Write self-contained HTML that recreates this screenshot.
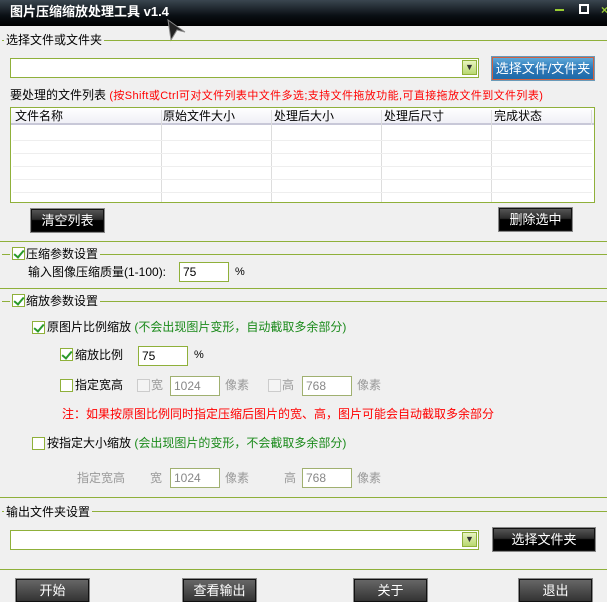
<!DOCTYPE html>
<html><head><meta charset="utf-8"><style>
*{margin:0;padding:0;box-sizing:border-box}
body{width:607px;height:588px;overflow:hidden;background:#f0f0f0;position:relative;font-family:"Liberation Sans","Noto Sans CJK SC","WenQuanYi Zen Hei",sans-serif;font-size:12px;color:#000}
.a{position:absolute;white-space:nowrap;line-height:14px}
.hl{position:absolute;left:0;width:607px;height:1px;background:#8fb03a}
.lab{position:absolute;background:#f0f0f0;padding:0 2px;line-height:14px}
.inp{position:absolute;background:#fff;border:1px solid #8fb03a;height:20px;line-height:18px;padding-left:3px;font-size:12px}
.dis{color:#888;border-color:#a0b070}
.cb{position:absolute;width:13px;height:13px;border:1px solid #8fb03a;background:#fff}
.cb.on::after{content:"";position:absolute;left:3px;top:0px;width:4px;height:8px;border:solid #2a9a2a;border-width:0 2px 2px 0;transform:rotate(40deg)}
.cb.g{border-color:#ccc;background:#f4f4f4}
.btn{position:absolute;background:linear-gradient(#555 0,#2a2a2a 45%,#000 50%,#000 100%);border:1px solid #111;outline:1px solid #888;color:#fff;text-align:center;font-size:13px;line-height:22px}
.dd{position:absolute;width:15px;height:15px;border:1px solid #8fb03a;background:linear-gradient(#e8f4c0,#b8d870);font-size:9px;line-height:13px;text-align:center;color:#333}
.grn{color:#1a8a1a}.red{color:#f00}.gry{color:#999}
</style></head><body>
<div style="position:absolute;left:0;top:0;width:607px;height:26px;background:linear-gradient(#3a4650,#0a0f14 60%,#000)"></div>
<div class="a" style="left:10px;top:5px;color:#fff;font-size:13px;font-weight:bold">图片压缩缩放处理工具 v1.4</div>
<div style="position:absolute;left:555px;top:9px;width:9px;height:2px;background:#9c3"></div>
<div style="position:absolute;left:579px;top:4px;width:10px;height:10px;border:2px solid #fff"></div>
<div class="a" style="left:601px;top:3px;color:#9c3;font-weight:bold">×</div>
<svg style="position:absolute;left:165px;top:18px" width="22" height="24"><path d="M3 2 L20 14 L12 12 L6 22 Z" fill="#222" stroke="#888"/></svg>

<div class="hl" style="top:40px;left:2px"></div>
<div class="lab" style="left:4px;top:33px">选择文件或文件夹</div>
<div class="inp" style="left:10px;top:58px;width:469px"></div>
<div class="dd" style="left:462px;top:60px">▼</div>
<div class="btn" style="left:492px;top:57px;width:102px;height:23px;background:linear-gradient(#5ea8d8,#2c78b8 50%,#1f6aa8);border:1px solid #d06040;outline:1px solid #6a9ab8">选择文件/文件夹</div>
<div class="a" style="left:10px;top:88px">要处理的文件列表 <span class="red" style="font-size:11px;letter-spacing:0.4px">(按Shift或Ctrl可对文件列表中文件多选;支持文件拖放功能,可直接拖放文件到文件列表)</span></div>
<div style="position:absolute;left:10px;top:107px;width:585px;height:96px;border:1px solid #8fb03a;background:#fff">
<div style="position:absolute;left:0;top:0;width:583px;height:17px;background:linear-gradient(#fff,#f0f0f6);border-bottom:2px solid #c8c8d8"></div>
<div class="a" style="left:4px;top:1px">文件名称</div><div class="a" style="left:152px;top:1px">原始文件大小</div><div class="a" style="left:263px;top:1px">处理后大小</div><div class="a" style="left:373px;top:1px">处理后尺寸</div><div class="a" style="left:483px;top:1px">完成状态</div>
<div style="position:absolute;left:150px;top:2px;width:1px;height:92px;background:#ddd"></div>
<div style="position:absolute;left:260px;top:2px;width:1px;height:92px;background:#ddd"></div>
<div style="position:absolute;left:370px;top:2px;width:1px;height:92px;background:#ddd"></div>
<div style="position:absolute;left:480px;top:2px;width:1px;height:92px;background:#ddd"></div>
<div style="position:absolute;left:580px;top:2px;width:1px;height:15px;background:#ddd"></div>
<div style="position:absolute;left:2px;top:32px;width:579px;height:1px;background:#eee"></div>
<div style="position:absolute;left:2px;top:45px;width:579px;height:1px;background:#eee"></div>
<div style="position:absolute;left:2px;top:58px;width:579px;height:1px;background:#eee"></div>
<div style="position:absolute;left:2px;top:71px;width:579px;height:1px;background:#eee"></div>
<div style="position:absolute;left:2px;top:84px;width:579px;height:1px;background:#eee"></div>
</div>
<div class="btn" style="left:31px;top:209px;width:73px;height:23px">清空列表</div>
<div class="btn" style="left:499px;top:208px;width:73px;height:23px">删除选中</div>

<div class="hl" style="top:241px"></div>
<div class="hl" style="top:254px;left:2px"></div>
<div class="lab" style="left:10px;top:247px;padding-left:16px">压缩参数设置</div>
<div class="cb on" style="left:12px;top:247px"></div>
<div class="a" style="left:28px;top:265px">输入图像压缩质量(1-100):</div>
<div class="inp" style="left:179px;top:262px;width:50px">75</div>
<div class="a" style="left:235px;top:265px;font-size:11px">%</div>

<div class="hl" style="top:288px"></div>
<div class="hl" style="top:301px;left:2px"></div>
<div class="lab" style="left:10px;top:294px;padding-left:16px">缩放参数设置</div>
<div class="cb on" style="left:12px;top:294px"></div>

<div class="cb on" style="left:32px;top:321px"></div>
<div class="a" style="left:47px;top:320px">原图片比例缩放 <span class="grn">(不会出现图片变形，自动截取多余部分)</span></div>
<div class="cb on" style="left:60px;top:348px"></div>
<div class="a" style="left:75px;top:348px">缩放比例</div>
<div class="inp" style="left:138px;top:346px;width:50px">75</div>
<div class="a" style="left:194px;top:348px;font-size:11px">%</div>
<div class="cb" style="left:60px;top:379px"></div>
<div class="a" style="left:75px;top:378px">指定宽高</div>
<div class="cb g" style="left:137px;top:379px"></div>
<div class="a gry" style="left:151px;top:378px">宽</div>
<div class="inp dis" style="left:170px;top:376px;width:50px">1024</div>
<div class="a gry" style="left:225px;top:378px">像素</div>
<div class="cb g" style="left:268px;top:379px"></div>
<div class="a gry" style="left:282px;top:378px">高</div>
<div class="inp dis" style="left:302px;top:376px;width:50px">768</div>
<div class="a gry" style="left:357px;top:378px">像素</div>
<div class="a red" style="left:62px;top:407px">注：如果按原图比例同时指定压缩后图片的宽、高，图片可能会自动截取多余部分</div>
<div class="cb" style="left:32px;top:437px"></div>
<div class="a" style="left:47px;top:436px">按指定大小缩放 <span class="grn">(会出现图片的变形，不会截取多余部分)</span></div>
<div class="a gry" style="left:77px;top:471px">指定宽高</div>
<div class="a gry" style="left:150px;top:471px">宽</div>
<div class="inp dis" style="left:170px;top:468px;width:50px">1024</div>
<div class="a gry" style="left:225px;top:471px">像素</div>
<div class="a gry" style="left:284px;top:471px">高</div>
<div class="inp dis" style="left:302px;top:468px;width:50px">768</div>
<div class="a gry" style="left:357px;top:471px">像素</div>

<div class="hl" style="top:497px"></div>
<div class="hl" style="top:511px;left:2px"></div>
<div class="lab" style="left:4px;top:505px">输出文件夹设置</div>
<div class="inp" style="left:10px;top:530px;width:469px"></div>
<div class="dd" style="left:462px;top:532px">▼</div>
<div class="btn" style="left:493px;top:528px;width:102px;height:23px">选择文件夹</div>
<div class="hl" style="top:569px"></div>
<div class="btn" style="left:16px;top:579px;width:73px;height:23px;background:linear-gradient(#666,#333)">开始</div>
<div class="btn" style="left:183px;top:579px;width:73px;height:23px;background:linear-gradient(#666,#333)">查看输出</div>
<div class="btn" style="left:354px;top:579px;width:73px;height:23px;background:linear-gradient(#666,#333)">关于</div>
<div class="btn" style="left:519px;top:579px;width:73px;height:23px;background:linear-gradient(#666,#333)">退出</div>
</body></html>
